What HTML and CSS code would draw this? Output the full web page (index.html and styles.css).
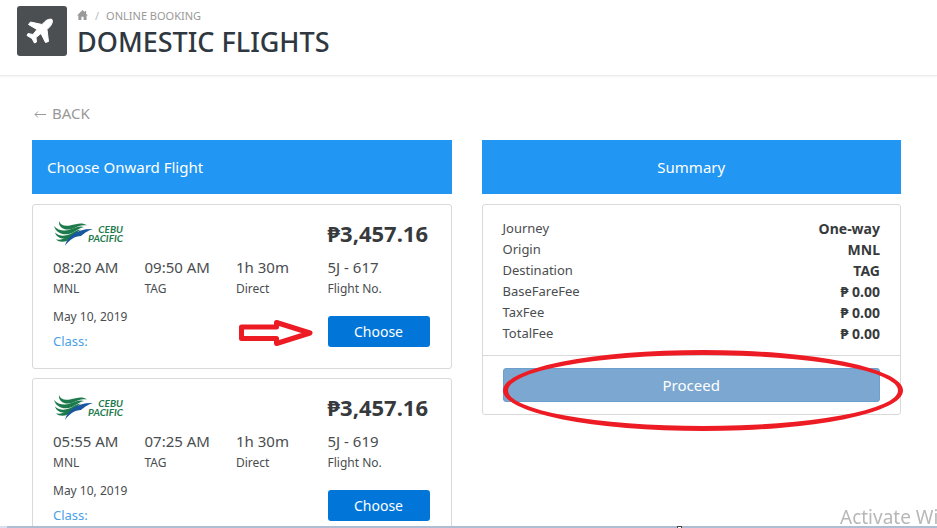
FILE: index.html
```html
<!DOCTYPE html>
<html lang="en">
<head>
<meta charset="utf-8">
<meta name="viewport" content="width=device-width, initial-scale=1">
<title>Domestic Flights</title>
<link rel="stylesheet" href="styles.css">
</head>
<body>
<svg class="sprite" aria-hidden="true">
  <symbol id="wing" viewBox="0 0 40 26">
    <path fill="#1c7a4c" d="M6 0c1 4 5 5.500 11 4.500C24 3 29 1 34 4.500c-6-1-9 1-14 3C13 10.500 5 7 6 0z"/>
    <path fill="#1c7a4c" d="M1 5c4 4.500 10 5.500 16 3.500 5-2 10-4 14-2.500-5 1-8 4-12 6C11 15.500 3 12 1 5z"/>
    <path fill="#1c7a4c" d="M2 11.500c4 3.500 9 4 14 2 5-2 8-5 12-5-4 2-6 5.500-10 7.500-7 3.500-14 1.500-16-4.500z"/>
    <path fill="#1c7a4c" d="M3 18.500c5 .5 8-.5 12-3 3-1.500 5-4 8-5-3 4-4 7-8 9-5 2-9 1.500-12-1z"/>
    <path fill="#1b579e" d="M12 25c2-9 11-17.500 28-17-6 2-9 4.500-12 7-6 0-12 4-16 10z"/>
  </symbol>
</svg>

<header class="page-header">
  <div class="page-icon">
    <svg viewBox="0 0 50 50" aria-hidden="true"><path d="M35 13.500c-1.500-1-5 0-7 2L25 18.500 13.500 16 11.500 18.500 20 23.500 16 28.500 11 27.500 10 29.500 15 32.500 17.500 37 19.500 36 19 31.500 24 27.500 28.500 36.500 31.500 35.500 30 23.500 33 20.500c2-2 3-5.500 2-7z"/></svg>
  </div>
  <div class="page-heading">
    <nav class="crumbs" aria-label="Breadcrumb">
      <a href="#" aria-label="Home"><svg class="home" viewBox="0 0 12 11" aria-hidden="true"><path d="M6 0L0 6h1.500v5h3.300V7.500h2.400V11h3.300V6H12L10 4V1H8.500v1.500z"/></svg></a>
      <span class="slash">/</span>
      <span>ONLINE BOOKING</span>
    </nav>
    <h1>DOMESTIC FLIGHTS</h1>
  </div>
</header>

<main class="content">
  <a class="back" href="#"><svg viewBox="0 0 12 8" aria-hidden="true"><path d="M12 4.500H1M4 1.500l-3 3 3 3"/></svg>BACK</a>
  <div class="columns">
    <section>
      <h2 class="bar">Choose Onward Flight</h2>
      <article class="card flight">
        <div class="airline"><svg viewBox="0 0 40 26" aria-hidden="true"><use href="#wing"/></svg><span>CEBU PACIFIC</span></div>
        <strong class="price">₱3,457.16</strong>
        <div class="leg"><span class="value">08:20 AM</span><span class="note">MNL</span></div>
        <div class="leg"><span class="value">09:50 AM</span><span class="note">TAG</span></div>
        <div class="leg"><span class="value">1h 30m</span><span class="note">Direct</span></div>
        <div class="leg"><span class="value">5J - 617</span><span class="note">Flight No.</span></div>
        <div class="date"><span class="note">May 10, 2019</span><a class="class" href="#">Class:</a></div>
        <div class="action">
          <button class="choose" type="button">Choose</button>
          <svg class="arrow" viewBox="0 0 74 28" aria-hidden="true"><path d="M2.500 8h35V3.500L71 14 37.500 24.500V19.500h-35z"/></svg>
        </div>
      </article>
      <article class="card flight">
        <div class="airline"><svg viewBox="0 0 40 26" aria-hidden="true"><use href="#wing"/></svg><span>CEBU PACIFIC</span></div>
        <strong class="price">₱3,457.16</strong>
        <div class="leg"><span class="value">05:55 AM</span><span class="note">MNL</span></div>
        <div class="leg"><span class="value">07:25 AM</span><span class="note">TAG</span></div>
        <div class="leg"><span class="value">1h 30m</span><span class="note">Direct</span></div>
        <div class="leg"><span class="value">5J - 619</span><span class="note">Flight No.</span></div>
        <div class="date"><span class="note">May 10, 2019</span><a class="class" href="#">Class:</a></div>
        <div class="action"><button class="choose" type="button">Choose</button></div>
      </article>
    </section>
    <section>
      <h2 class="bar centered">Summary</h2>
      <div class="card">
        <dl class="summary">
          <div><dt>Journey</dt><dd>One-way</dd></div>
          <div><dt>Origin</dt><dd>MNL</dd></div>
          <div><dt>Destination</dt><dd>TAG</dd></div>
          <div><dt>BaseFareFee</dt><dd>₱ 0.00</dd></div>
          <div><dt>TaxFee</dt><dd>₱ 0.00</dd></div>
          <div><dt>TotalFee</dt><dd>₱ 0.00</dd></div>
        </dl>
        <div class="footer">
          <button class="proceed" type="button" disabled>Proceed</button>
          <div class="ring"></div>
        </div>
      </div>
    </section>
  </div>
</main>
<div class="watermark">Activate Windows</div>
<div class="edge"><span class="handle"></span></div>
</body>
</html>
```
FILE: styles.css
```css
* { box-sizing: border-box; }
body {
  margin: 0;
  height: 100vh;
  overflow: hidden;
  background: #fff;
  color: #4a4d50;
  font: 14px/21px "Noto Sans", "Open Sans", sans-serif;
}
h1, h2, dl, dd { margin: 0; font-weight: 400; }
a { color: inherit; text-decoration: none; }
.sprite { position: absolute; width: 0; height: 0; }

.page-header {
  display: flex;
  gap: 10px;
  height: 76px;
  padding: 6px 17px;
  border-bottom: 1px solid #ececec;
  box-shadow: 0 1px 2px #f4f4f4;
}
.page-icon {
  width: 50px;
  height: 50px;
  border-radius: 3px;
  background: #4b4f52;
}
.page-icon svg {
  display: block;
  fill: #fff;
  stroke: #fff;
  stroke-width: 1;
  stroke-linejoin: round;
}
.crumbs {
  display: flex;
  align-items: center;
  gap: 7px;
  height: 18px;
  color: #999;
  font-size: 11px;
}
.slash { color: #bbb; }
.home { display: block; width: 11px; height: 10px; fill: #999; }
h1 { color: #2f3740; font-size: 27px; font-weight: 500; line-height: 36px; }

.content { padding: 27px 36px 0 32px; }
.back {
  display: flex;
  align-items: center;
  gap: 6px;
  margin-bottom: 16px;
  padding-left: 2px;
  color: #999;
  font-size: 15px;
}
.back svg { width: 12px; height: 8px; fill: none; stroke: #999; }
.columns { display: grid; grid-template-columns: 1fr 1fr; gap: 30px; }
.bar {
  margin-bottom: 10px;
  padding: 15px;
  background: #2196f3;
  color: #fff;
  font-size: 15px;
  line-height: 24px;
}
.centered { text-align: center; }
.card { border: 1px solid #d9d9d9; border-radius: 3px; background: #fff; }

.flight {
  display: grid;
  grid-template-columns: 1fr 1fr 1fr 102px;
  margin-bottom: 9px;
  padding: 15px 21px 16px 20px;
}
.airline { display: flex; grid-column: 1 / 4; height: 28px; }
.airline svg { flex: none; width: 40px; height: 26px; margin-top: 1px; }
.airline span {
  width: 38px;
  margin: 5px 0 0 -8px;
  color: #1c7a4c;
  font: italic 700 10px/9px Lato, sans-serif;
  text-align: right;
}
.price { color: #373a3c; font-size: 22px; line-height: 26px; white-space: nowrap; }
.leg, .date { display: flex; flex-direction: column; white-space: nowrap; }
.leg { padding-top: 8px; }
.value { font-size: 15px; line-height: 22px; }
.note { font-size: 12px; line-height: 21px; }
.date { grid-column: 1 / 4; padding-top: 7px; }
.class { padding-top: 3px; color: #4a9fe8; font-size: 13px; line-height: 22px; }
.action { position: relative; padding-top: 17px; }
button { border: 0; border-radius: 3px; color: #fff; font-family: inherit; }
.choose {
  display: block;
  width: 100%;
  height: 31px;
  background: #0275d8;
  font-size: 14px;
}
.arrow {
  position: absolute;
  top: 20px;
  right: 117px;
  width: 74px;
  height: 28px;
  fill: none;
  stroke: #ed1c24;
  stroke-width: 5;
  stroke-linejoin: round;
}

.summary { padding: 13px 20px 11px; }
.summary div { display: flex; justify-content: space-between; }
dt { font-size: 13px; }
dd { color: #373a3c; font-weight: 700; }
.footer { position: relative; padding: 12px 20px; border-top: 1px solid #d9d9d9; }
.proceed {
  display: block;
  width: 100%;
  height: 34px;
  border: 1px solid #6b9fce;
  background: #7ba7d1;
  font-size: 15px;
}
.ring {
  position: absolute;
  inset: -6px -3px -17px 20px;
  border: 5px solid #ed1c24;
  border-radius: 50%;
}

.watermark {
  position: fixed;
  left: calc(100% - 97px);
  bottom: -3px;
  color: #b8b8b8;
  font-size: 19px;
  line-height: 28px;
  white-space: nowrap;
}
.edge {
  position: fixed;
  inset: auto 0 0 0;
  height: 2px;
  border-left: 7px solid #d5dfee;
  background: #afbdd3;
}
.handle {
  position: absolute;
  left: 72%;
  bottom: 0;
  width: 5px;
  height: 2px;
  border: 1px solid #444;
  border-bottom: 0;
  background: #fff;
}
```
